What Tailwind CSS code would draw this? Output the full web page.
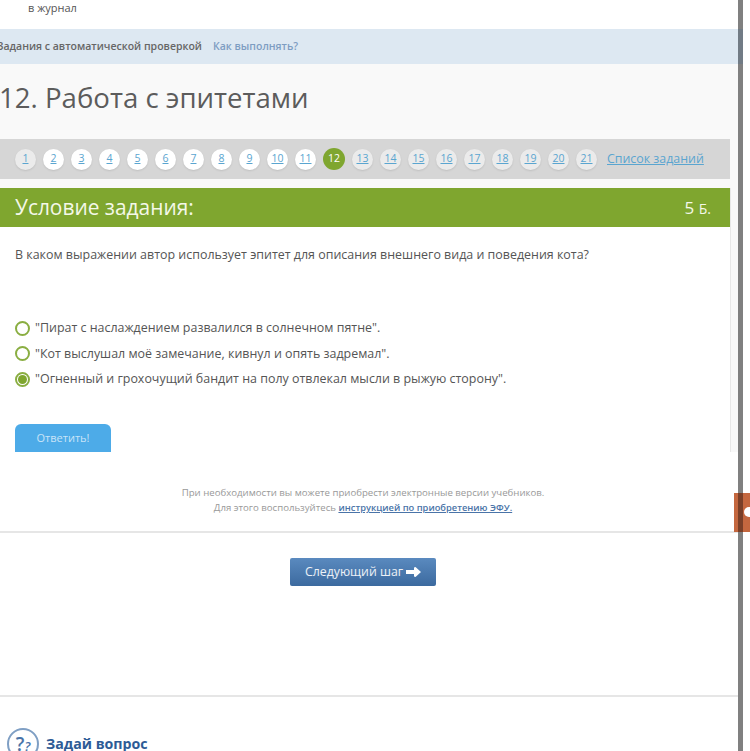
<!DOCTYPE html>
<html lang="ru"><head><meta charset="utf-8"><script src="https://cdn.jsdelivr.net/npm/@tailwindcss/browser@4"></script></head>
<body class="bg-white font-['Open_Sans',sans-serif] overflow-hidden">
<div class="relative w-[750px] h-[751px] overflow-hidden">
  <div class="w-[738px] flex flex-col">
    <div class="h-[29px] pl-[28px] pt-[1px] text-[11px] leading-[13px] text-[#555] bg-white">в журнал</div>
    <div class="w-[743px] h-[35px] bg-[#dde8f2] flex items-center -ml-[3px] text-[10.5px] font-semibold text-[#666] gap-[11px]"><span>Задания с автоматической проверкой</span><span class="text-[#7d9dc2]">Как выполнять?</span></div>
    <div class="bg-[#f9f9f9] h-[388px] flex flex-col">
      <h1 class="h-[75px] pb-[7px] -ml-[1px] flex items-center text-[27.6px] text-[#5c5c5c] font-normal">12. Работа с эпитетами</h1>
      <nav class="w-[730px] h-[40px] bg-[#d6d6d6] flex items-center pl-[15px] text-[10.5px] text-[#5aa5d0]">
        <div class="flex items-center gap-[7px]">
          <a class="w-[21px] h-[21px] rounded-full bg-[#ebebeb] shadow-[0_1px_2px_#0000001a] flex items-center justify-center underline">1</a>
          <a class="w-[21px] h-[21px] rounded-full bg-white shadow-[0_1px_2px_#0000001a] flex items-center justify-center underline">2</a>
          <a class="w-[21px] h-[21px] rounded-full bg-white shadow-[0_1px_2px_#0000001a] flex items-center justify-center underline">3</a>
          <a class="w-[21px] h-[21px] rounded-full bg-white shadow-[0_1px_2px_#0000001a] flex items-center justify-center underline">4</a>
          <a class="w-[21px] h-[21px] rounded-full bg-white shadow-[0_1px_2px_#0000001a] flex items-center justify-center underline">5</a>
          <a class="w-[21px] h-[21px] rounded-full bg-white shadow-[0_1px_2px_#0000001a] flex items-center justify-center underline">6</a>
          <a class="w-[21px] h-[21px] rounded-full bg-white shadow-[0_1px_2px_#0000001a] flex items-center justify-center underline">7</a>
          <a class="w-[21px] h-[21px] rounded-full bg-white shadow-[0_1px_2px_#0000001a] flex items-center justify-center underline">8</a>
          <a class="w-[21px] h-[21px] rounded-full bg-white shadow-[0_1px_2px_#0000001a] flex items-center justify-center underline">9</a>
          <a class="w-[21px] h-[21px] rounded-full bg-white shadow-[0_1px_2px_#0000001a] flex items-center justify-center underline">10</a>
          <a class="w-[21px] h-[21px] rounded-full bg-white shadow-[0_1px_2px_#0000001a] flex items-center justify-center underline">11</a>
          <a class="w-[22px] h-[22px] rounded-full bg-[#7fa62f] text-white flex items-center justify-center">12</a>
          <a class="w-[21px] h-[21px] rounded-full bg-[#ebebeb] shadow-[0_1px_2px_#0000001a] flex items-center justify-center underline">13</a>
          <a class="w-[21px] h-[21px] rounded-full bg-[#ebebeb] shadow-[0_1px_2px_#0000001a] flex items-center justify-center underline">14</a>
          <a class="w-[21px] h-[21px] rounded-full bg-[#ebebeb] shadow-[0_1px_2px_#0000001a] flex items-center justify-center underline">15</a>
          <a class="w-[21px] h-[21px] rounded-full bg-[#ebebeb] shadow-[0_1px_2px_#0000001a] flex items-center justify-center underline">16</a>
          <a class="w-[21px] h-[21px] rounded-full bg-[#ebebeb] shadow-[0_1px_2px_#0000001a] flex items-center justify-center underline">17</a>
          <a class="w-[21px] h-[21px] rounded-full bg-[#ebebeb] shadow-[0_1px_2px_#0000001a] flex items-center justify-center underline">18</a>
          <a class="w-[21px] h-[21px] rounded-full bg-[#ebebeb] shadow-[0_1px_2px_#0000001a] flex items-center justify-center underline">19</a>
          <a class="w-[21px] h-[21px] rounded-full bg-[#ebebeb] shadow-[0_1px_2px_#0000001a] flex items-center justify-center underline">20</a>
          <a class="w-[21px] h-[21px] rounded-full bg-[#ebebeb] shadow-[0_1px_2px_#0000001a] flex items-center justify-center underline">21</a>
        </div>
        <a class="ml-[10px] text-[12.4px] underline">Список заданий</a>
      </nav>
      <section class="mt-[9px] w-[731px] flex-1 flex flex-col bg-white border-r border-[#e8e8e8]">
        <div class="h-[39px] bg-[#7fa62f] text-[#f4f8e8] flex items-center justify-between pl-[15px] pr-[19px]"><span class="text-[20.9px]">Условие задания:</span><span class="text-[17px]">5 <span class="text-[14px]">Б.</span></span></div>
        <p class="ml-[15px] mt-[20px] text-[12.45px] leading-[16px] text-[#555]">В каком выражении автор использует эпитет для описания внешнего вида и поведения кота?</p>
        <div class="ml-[15px] mt-[57px] flex flex-col gap-[9.5px] text-[12.45px] leading-[16px] text-[#555]">
          <label class="flex items-center gap-[5px]"><span class="w-[15px] h-[15px] rounded-full border-2 border-[#8aae42] bg-white"></span>"Пират с наслаждением развалился в солнечном пятне".</label>
          <label class="flex items-center gap-[5px]"><span class="w-[15px] h-[15px] rounded-full border-2 border-[#8aae42] bg-white"></span>"Кот выслушал моё замечание, кивнул и опять задремал".</label>
          <label class="flex items-center gap-[5px]"><span class="w-[15px] h-[15px] rounded-full border-2 border-[#8aae42] bg-white flex items-center justify-center"><span class="w-[9px] h-[9px] rounded-full bg-[#7fa62f]"></span></span>"Огненный и грохочущий бандит на полу отвлекал мысли в рыжую сторону".</label>
        </div>
        <div class="ml-[15px] mt-[37px] w-[96px] h-[28px] bg-[#4dabe8] rounded-t-[6px] text-white/70 text-[11px] flex items-center justify-center">Ответить!</div>
      </section>
    </div>
    <div class="h-[81px] bg-white border-b-2 border-[#e6e6e6] pr-[12px] flex flex-col items-center pt-[33px] text-[9.65px] leading-[15px] text-[#999]">
      <p>При необходимости вы можете приобрести электронные версии учебников.</p>
      <p>Для этого воспользуйтесь <a class="text-[#4a74a8] underline font-semibold text-[9.3px]">инструкцией по приобретению ЭФУ.</a></p>
    </div>
    <div class="h-[164px] bg-white flex justify-center pt-[25px] pr-[12px] border-b-2 border-[#e6e6e6]">
      <a class="w-[146px] h-[28px] rounded-[2px] bg-gradient-to-b from-[#5a8abf] to-[#3c6a9f] text-white/90 text-[12.3px] flex items-center justify-center gap-[3px]">Следующий шаг
        <svg width="15" height="10" viewBox="0 0 15 10"><path d="M0 3h8V0.5L9.5 0 15 5 9.5 10 8 9.5V7H0z" fill="#fff"/></svg>
      </a>
    </div>
    <div class="flex items-center gap-[7px] pl-[7px] pt-[31px]">
      <span class="w-[32px] h-[32px] rounded-full border-2 border-[#7f9fc4] text-[#4a74a8] flex items-center justify-center font-semibold shrink-0 leading-none"><span class="text-[19px]">?</span><span class="text-[13px] italic mt-[4px]">?</span></span>
      <span class="text-[14.2px] font-bold text-[#2d5b96]">Задай вопрос</span>
    </div>
  </div>
  <div class="absolute left-[738px] top-0 w-[5px] h-[751px] bg-[#808080]"></div>
  <div class="absolute left-[738px] top-[29px] w-[5px] h-[35px] bg-[#717b85]"></div>
  <div class="absolute left-[734px] top-[493px] w-[16px] h-[39px] bg-[#c4673f] overflow-hidden">
    <div class="absolute left-[4px] top-0 w-[5px] h-[39px] bg-[#7a3f28]"></div>
    <div class="absolute left-[10px] top-[14px] w-[10px] h-[10px] rounded-full bg-white"></div>
  </div>
</div>
</body></html>
